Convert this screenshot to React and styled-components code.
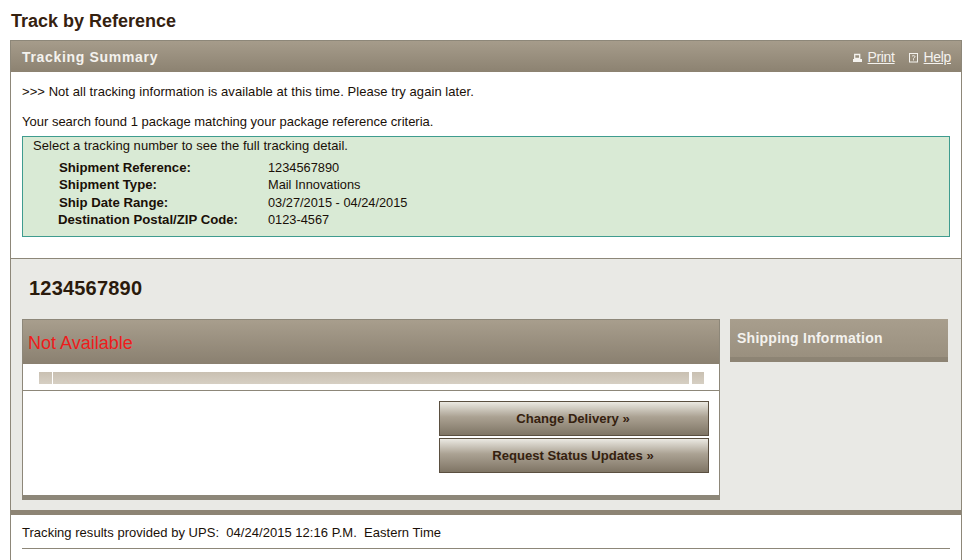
import React from 'react';
import styled, { createGlobalStyle } from 'styled-components';

const GlobalStyle = createGlobalStyle`
  html, body {
    margin: 0;
    padding: 0;
    background: #fff;
    font-family: "Liberation Sans", Arial, sans-serif;
    font-size: 13px;
    color: #1a1008;
  }
`;

const Page = styled.div`
  width: 980px;
  height: 560px;
  overflow: hidden;
  padding: 11px 18px 0 10px;
  box-sizing: border-box;
`;

const Title = styled.h1`
  margin: 0 0 9px 1px;
  height: 20px;
  font-size: 18px;
  line-height: 20px;
  font-weight: 700;
  color: #35210f;
`;

const Panel = styled.div`
  height: 530px;
  box-sizing: border-box;
  border: solid #8d8779;
  border-width: 1px 1px 0 1px;
`;

const PanelHeader = styled.div`
  height: 31px;
  padding: 0 10px 0 11px;
  display: flex;
  align-items: center;
  justify-content: space-between;
  background: linear-gradient(#a69c8b, #8c8271);
`;

const PanelTitle = styled.div`
  font-size: 14px;
  font-weight: 700;
  letter-spacing: 0.68px;
  color: #f4f2ee;
`;

const Tools = styled.div`
  display: flex;
  align-items: center;
  gap: 14px;
`;

const ToolLink = styled.a`
  display: flex;
  align-items: center;
  gap: 6px;
  font-size: 14px;
  letter-spacing: -0.35px;
  color: #f4f2ee;
  span { text-decoration: underline; }
  svg { display: block; margin-top: 2px; }
`;

const Summary = styled.div`
  height: 186px;
  padding: 12px 11px 0;
  box-sizing: border-box;
  background: #fff;
`;

const Message = styled.div`
  height: 16px;
  line-height: 16px;
  letter-spacing: ${props => props.$spacing || 0}px;
  margin-bottom: ${props => props.$gap}px;
`;

const GreenBox = styled.div`
  height: 101px;
  box-sizing: border-box;
  padding: 0 0 0 10px;
  background: #d9ead5;
  border: 1px solid #3f9c8f;
`;

const Instruction = styled.div`
  height: 22px;
  padding-top: 1px;
  box-sizing: border-box;
  line-height: 16px;
  letter-spacing: 0.05px;
`;

const DetailRow = styled.div`
  display: grid;
  grid-template-columns: ${props => 235 - props.$indent}px 1fr;
  height: 17.4px;
  line-height: 17.4px;
  padding-left: ${props => props.$indent}px;
`;

const DetailLabel = styled.div`
  font-size: 13.2px;
  font-weight: 700;
`;

const DetailValue = styled.div`
  font-size: 12.8px;
`;

const Results = styled.div`
  height: 252px;
  box-sizing: border-box;
  padding: 0 11px;
  background: #e9e9e5;
  border-top: 1px solid #8d8779;
`;

const TrackingNumber = styled.div`
  height: 60px;
  padding-left: 7px;
  line-height: 58px;
  font-size: 20px;
  letter-spacing: 0.2px;
  font-weight: 700;
  color: #2a1a0c;
`;

const Columns = styled.div`
  display: flex;
  align-items: flex-start;
  gap: 10px;
`;

const StatusCard = styled.div`
  width: 698px;
  height: 181px;
  box-sizing: border-box;
  background: #fff;
  border: solid #8d8779;
  border-width: 1px 1px 5px 1px;
`;

const StatusHeader = styled.div`
  height: 44px;
  padding: 3px 0 0 5px;
  box-sizing: border-box;
  display: flex;
  align-items: center;
  font-size: 18px;
  color: #ee1c1c;
  background: linear-gradient(#a89e8d, #8a8070);
`;

const ProgressRow = styled.div`
  height: 27px;
  box-sizing: border-box;
  padding: 8px 15px 0 16px;
  display: flex;
  gap: 1px;
  border-bottom: 1px solid #8d8779;
`;

const ProgressCap = styled.div`
  width: ${props => props.$w}px;
  height: 12px;
  margin-left: ${props => props.$left || 0}px;
  background: linear-gradient(#c9c0b2, #d6cfc3);
`;

const ProgressBar = styled.div`
  flex: 1;
  height: 12px;
  background: linear-gradient(#c9c0b2, #d6cfc3);
`;

const Actions = styled.div`
  padding: 10px 10px 0 0;
  display: flex;
  flex-direction: column;
  align-items: flex-end;
  gap: 2px;
`;

const ActionButton = styled.button`
  width: 270px;
  height: 35px;
  padding: 0 2px 0 0;
  border: 1px solid #5a4f40;
  font-family: inherit;
  font-size: 13.1px;
  font-weight: 700;
  color: #35210f;
  background: linear-gradient(#ebe9e2, #aba293 45%, #7f7565);
`;

const ShippingCard = styled.div`
  width: 218px;
  height: 43px;
  box-sizing: border-box;
  padding: 0 0 1px 7px;
  display: flex;
  align-items: center;
  font-size: 14px;
  font-weight: 700;
  letter-spacing: 0.25px;
  color: #f4f2ee;
  background: linear-gradient(#a89e8d, #9a907f);
  border-bottom: 5px solid #8d8474;
`;

const Band = styled.div`
  height: 5px;
  background: #8d8474;
`;

const Footer = styled.div`
  padding: 10px 11px 0;
`;

const FooterText = styled.div`
  height: 23px;
  line-height: 16px;
  letter-spacing: 0.03px;
  white-space: pre;
  border-bottom: 1px solid #8d8779;
`;

const PrintIcon = () => (
  <svg width="9" height="10" viewBox="0 0 9 10">
    <path d="M1.7 1.5h5v4h-5z" fill="none" stroke="#f4f2ee" strokeWidth="1.3" />
    <path d="M0 6h9v3h-9z" fill="#f4f2ee" />
  </svg>
);

const HelpIcon = () => (
  <svg width="9" height="10" viewBox="0 0 9 10">
    <rect x="0.5" y="0.5" width="8" height="8.5" fill="none" stroke="#f4f2ee" />
    <path d="M3 3.4c.3-1 3-1.1 3 .3 0 1-1.5 1-1.5 2M4.5 6.2v1.2" fill="none" stroke="#f4f2ee" />
  </svg>
);

const details = [
  { label: 'Shipment Reference:', value: '1234567890', indent: 26 },
  { label: 'Shipment Type:', value: 'Mail Innovations', indent: 26 },
  { label: 'Ship Date Range:', value: '03/27/2015 - 04/24/2015', indent: 26 },
  { label: 'Destination Postal/ZIP Code:', value: '0123-4567', indent: 25 },
];

export default function App() {
  return (
    <Page>
      <GlobalStyle />
      <Title>Track by Reference</Title>
      <Panel>
        <PanelHeader>
          <PanelTitle>Tracking Summary</PanelTitle>
          <Tools>
            <ToolLink><PrintIcon /><span>Print</span></ToolLink>
            <ToolLink><HelpIcon /><span>Help</span></ToolLink>
          </Tools>
        </PanelHeader>
        <Summary>
          <Message $gap={14} $spacing={0.06}>&gt;&gt;&gt; Not all tracking information is available at this time. Please try again later.</Message>
          <Message $gap={6}>Your search found 1 package matching your package reference criteria.</Message>
          <GreenBox>
            <Instruction>Select a tracking number to see the full tracking detail.</Instruction>
            {details.map(row => (
              <DetailRow key={row.label} $indent={row.indent}>
                <DetailLabel>{row.label}</DetailLabel>
                <DetailValue>{row.value}</DetailValue>
              </DetailRow>
            ))}
          </GreenBox>
        </Summary>
        <Results>
          <TrackingNumber>1234567890</TrackingNumber>
          <Columns>
            <StatusCard>
              <StatusHeader>Not Available</StatusHeader>
              <ProgressRow>
                <ProgressCap $w={13} />
                <ProgressBar />
                <ProgressCap $w={12} $left={2} />
              </ProgressRow>
              <Actions>
                <ActionButton>Change Delivery »</ActionButton>
                <ActionButton>Request Status Updates »</ActionButton>
              </Actions>
            </StatusCard>
            <ShippingCard>Shipping Information</ShippingCard>
          </Columns>
        </Results>
        <Band />
        <Footer>
          <FooterText>Tracking results provided by UPS:  04/24/2015 12:16 P.M.  Eastern Time</FooterText>
        </Footer>
      </Panel>
    </Page>
  );
}
